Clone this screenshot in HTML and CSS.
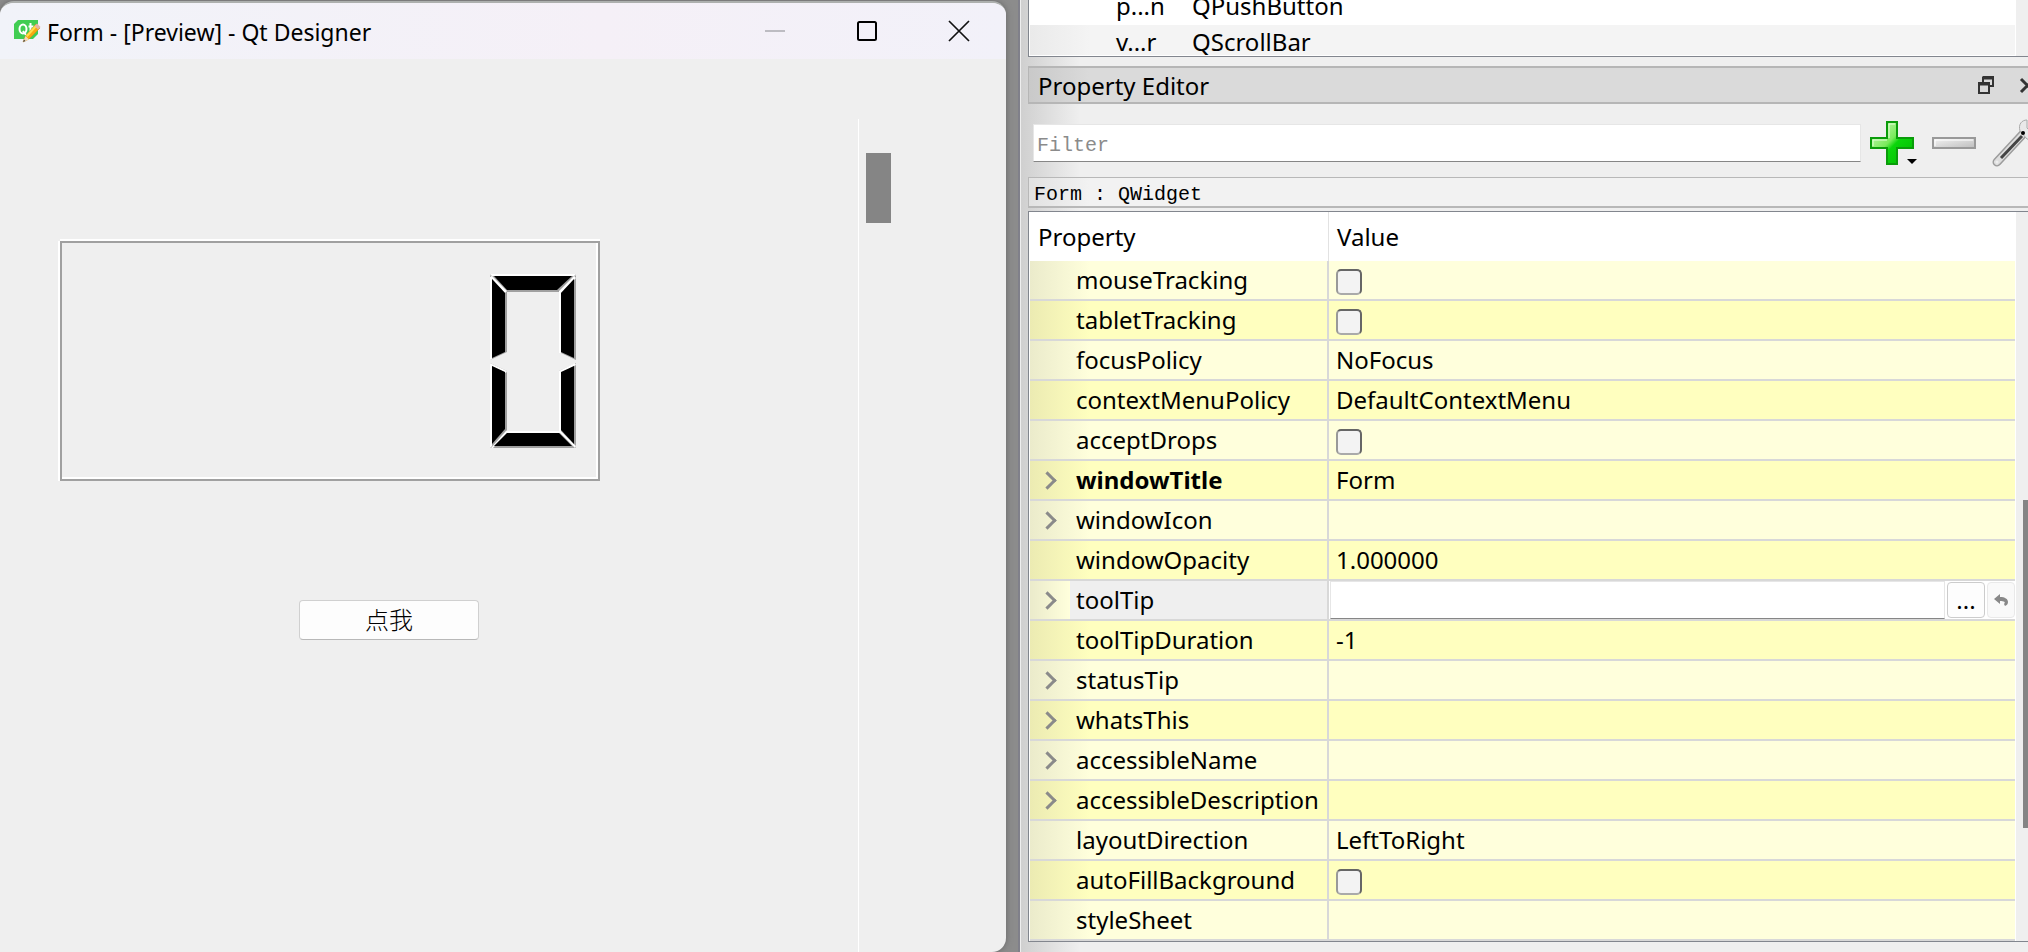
FILE: index.html
```html
<!DOCTYPE html>
<html lang="en">
<head>
<meta charset="utf-8">
<title>Form - [Preview] - Qt Designer</title>
<link rel="stylesheet" href="styles.css">
</head>
<body>
<div class="desktop">
  <section class="preview" aria-label="Form preview">
    <header class="titlebar">
      <svg class="app-icon" viewBox="0 0 28 26" aria-hidden="true">
        <path d="M5 2h20v14l-5 5H1V6z" fill="#41cd52"/>
        <ellipse cx="10" cy="11" rx="3.500" ry="4.500" fill="none" stroke="#fff" stroke-width="2"/>
        <path d="M10 13l3 4M17.500 5v8q0 2 2 2M15.500 8.500h5" fill="none" stroke="#fff" stroke-width="2"/>
        <path d="M10 24l2.500-6L23 6l4 4-11 11z" fill="#f7a90f" stroke="#d08b1c" stroke-width=".6"/>
        <path d="M13 17.500L22.500 7l1.500 1.500L14.500 19z" fill="#ffe04a"/>
        <path d="M21.500 8L24 5.500l3.500 3.500-2.500 2.500z" fill="#e3b3a6"/>
        <path d="M10 24l2.500-6 3.500 3.500z" fill="#f4dcb8"/>
        <path d="M10 24l1-2.500 1.500 1.500z" fill="#444"/>
      </svg>
      <h1 class="title">Form - [Preview] - Qt Designer</h1>
      <div class="window-buttons">
        <button class="wbtn" aria-label="Minimize" disabled><svg viewBox="0 0 20 20"><path d="M0 10h20" stroke="#bdbcc2" stroke-width="2"/></svg></button>
        <button class="wbtn" aria-label="Maximize"><svg viewBox="0 0 20 20"><rect x="1" y="1" width="18" height="18" rx="1.500" fill="none" stroke="#000" stroke-width="2"/></svg></button>
        <button class="wbtn" aria-label="Close"><svg viewBox="0 0 20 20"><path d="M0 0l20 20M20 0L0 20" stroke="#111" stroke-width="1.700"/></svg></button>
      </div>
    </header>
    <div class="form">
      <div class="form-main">
        <div class="lcd" role="img" aria-label="0">
          <svg class="digit" viewBox="0 0 88 176">
            <g fill="#a0a0a0">
              <path d="M1 1h86L71 19H17z"/><path d="M1 2l17 16v61L1 87z"/><path d="M87 2v85l-17-8V18z"/>
              <path d="M1 90l17 8v59L1 175z"/><path d="M87 90v85l-17-16V98z"/><path d="M1 175l16-17h54l16 17z"/>
            </g>
            <g fill="#fff">
              <path d="M1 1h86l-2 2H3z"/><path d="M1 4l2-1 15 15-2 2z"/><path d="M1 4h2v82l-2 1z"/><path d="M70 18L85 3l2 2-15 15v60h-2z"/>
              <path d="M1 90l17 8-1 2L3 93v80l-2 2z"/><path d="M86 90l1 2-15 8v58l15 15-1 2-16-16V98z"/><path d="M2 175l15-17h54v2H18L4 175z"/>
            </g>
            <path d="M5 3h78L68 17H18z"/><path d="M3 6l13 14v59L3 85z"/><path d="M85 6v79l-13-6V20z"/>
            <path d="M3 93l13 6v57L3 171z"/><path d="M85 93v78l-13-14V99z"/><path d="M5 173l13-13h52l13 13z"/>
          </svg>
        </div>
        <button class="push">点我</button>
      </div>
      <div class="vscroll"><div class="vthumb"></div></div>
    </div>
  </section>

  <section class="designer" aria-label="Qt Designer">
    <div class="inspector">
      <div class="inspector-rows">
        <div class="obj"><span>p...n</span><span>QPushButton</span></div>
        <div class="obj alt"><span>v...r</span><span>QScrollBar</span></div>
      </div>
      <div class="gutter"></div>
    </div>

    <header class="dock">
      <h2 class="dock-title">Property Editor</h2>
      <button class="dbtn" aria-label="Float"><svg viewBox="0 0 16 18"><path d="M5 1h10v9h-4M5 1v5" fill="none" stroke="#333" stroke-width="2"/><path d="M4 2h12" stroke="#333" stroke-width="3"/><rect x="1" y="7" width="10" height="10" fill="#d9d9d9" stroke="#333" stroke-width="2"/><path d="M0 8h12" stroke="#333" stroke-width="3"/></svg></button>
      <button class="dbtn" aria-label="Close panel"><svg viewBox="0 0 16 18"><path d="M1 3l13 13M14 3L1 16" stroke="#333" stroke-width="3"/></svg></button>
    </header>

    <div class="tools">
      <input class="filter" type="text" placeholder="Filter" aria-label="Filter">
      <button class="tool plus" aria-label="Add dynamic property">
        <svg viewBox="0 0 46 44">
          <defs><linearGradient id="g" x1="0" y1="0" x2="1" y2="1"><stop offset="0" stop-color="#d8f9c8"/><stop offset=".45" stop-color="#7aea5c"/><stop offset=".55" stop-color="#0bd60b"/><stop offset="1" stop-color="#00b800"/></linearGradient></defs>
          <path d="M17 1h10v16h16v10H27v16H17V27H1V17h16z" fill="url(#g)" stroke="#0a9c0a" stroke-width="2"/>
          <path d="M19 17V3h6M3 25v-6h14" fill="none" stroke="#e2ffd8" stroke-width="1"/>
        </svg>
        <svg class="caret" viewBox="0 0 10 6"><path d="M0 0h10L5 5z"/></svg>
      </button>
      <button class="tool minus" aria-label="Remove dynamic property">
        <svg viewBox="0 0 44 12"><defs><linearGradient id="m" x1="0" y1="0" x2="1" y2="1"><stop offset="0" stop-color="#f4f4f4"/><stop offset="1" stop-color="#bdbdbd"/></linearGradient></defs><rect x="1" y="1" width="42" height="10" fill="url(#m)" stroke="#999" stroke-width="2"/><path d="M3 9V3h38" fill="none" stroke="#fff"/></svg>
      </button>
      <button class="tool wrench" aria-label="Configure Property Editor">
        <svg viewBox="0 0 48 48">
          <path d="M5 43L31 15" stroke="#9c9c9c" stroke-width="9" stroke-linecap="round"/>
          <path d="M5 43L31 15" stroke="#dedede" stroke-width="6" stroke-linecap="round"/>
          <path d="M9 39L30 17" stroke="#444" stroke-width="3"/>
          <path d="M28 12c-2-7 2-11 7-11v8l4 4 8-1c0 7-6 10-12 8z" fill="#e9e9e9" stroke="#aaa"/>
          <circle cx="31" cy="14" r="2"/><circle cx="5" cy="43" r="1.500" fill="#eee"/>
        </svg>
      </button>
    </div>

    <div class="object-name">Form : QWidget</div>

    <div class="props">
      <table class="table">
        <thead><tr><th>Property</th><th>Value</th></tr></thead>
        <tbody>
          <tr><td><label for="c1">mouseTracking</label></td><td><input id="c1" class="check" type="checkbox"></td></tr>
          <tr><td><label for="c2">tabletTracking</label></td><td><input id="c2" class="check" type="checkbox"></td></tr>
          <tr><td>focusPolicy</td><td>NoFocus</td></tr>
          <tr><td>contextMenuPolicy</td><td>DefaultContextMenu</td></tr>
          <tr><td><label for="c3">acceptDrops</label></td><td><input id="c3" class="check" type="checkbox"></td></tr>
          <tr class="more changed"><td>windowTitle</td><td>Form</td></tr>
          <tr class="more"><td>windowIcon</td><td></td></tr>
          <tr><td>windowOpacity</td><td>1.000000</td></tr>
          <tr class="more current"><td><label for="tip">toolTip</label></td><td><div class="edit"><input id="tip" class="edit-text" type="text"><button class="edit-more">...</button><button class="edit-reset" aria-label="Reset"><svg viewBox="0 0 14 12"><path d="M0 5l6-5v3c5 0 8 2 8 5 0 2-1 3-3 4l-1-2c2-2 0-3-4-3v3z" fill="#888"/></svg></button></div></td></tr>
          <tr><td>toolTipDuration</td><td>-1</td></tr>
          <tr class="more"><td>statusTip</td><td></td></tr>
          <tr class="more"><td>whatsThis</td><td></td></tr>
          <tr class="more"><td>accessibleName</td><td></td></tr>
          <tr class="more"><td>accessibleDescription</td><td></td></tr>
          <tr><td>layoutDirection</td><td>LeftToRight</td></tr>
          <tr><td><label for="c4">autoFillBackground</label></td><td><input id="c4" class="check" type="checkbox"></td></tr>
          <tr><td>styleSheet</td><td></td></tr>
        </tbody>
      </table>
      <div class="gutter"><div class="gthumb"></div></div>
    </div>
  </section>
</div>
</body>
</html>
```
FILE: styles.css
```css
* { box-sizing: border-box; }
body { margin: 0; background: #8c8c8c; color: #000; font: 24px/32px "Noto Sans", "Noto Sans CJK SC", sans-serif; }
h1, h2 { margin: 0; font-size: inherit; font-weight: 400; }
button { border: 0; padding: 0; background: none; font: inherit; color: inherit; }
svg { display: block; overflow: visible; }

.desktop { display: grid; grid-template-columns: 1006fr 1010fr; column-gap: 12px; height: 100vh; overflow: hidden; }

.preview { display: flex; flex-direction: column; margin-top: 1px; border-top: 2px solid #adb0ae; border-radius: 14px 14px 14px 0; background: #efefef; overflow: hidden; box-shadow: 0 0 6px #666; }
.titlebar { display: flex; align-items: center; height: 56px; padding-left: 13px; background: linear-gradient(90deg, #f1f3f9, #f5f0f7 60%, #f2f1f9); }
.app-icon { width: 28px; height: 26px; }
.title { flex: 1; padding: 2px 0 0 6px; font-size: 23px; }
.window-buttons { display: flex; padding-right: 1px; }
.wbtn { display: grid; place-items: center; width: 92px; height: 56px; }
.wbtn svg { width: 20px; height: 20px; }
.form { flex: 1; display: flex; }
.form-main { flex: 1; display: flex; flex-direction: column; align-items: flex-start; padding: 182px 0 0 60px; }
.lcd { display: flex; justify-content: flex-end; width: 540px; max-width: 100%; height: 240px; padding: 30px 21px; border: 2px solid #a0a0a0; box-shadow: inset -2px -2px #fff, 0 -2px #fff, -2px 0 #fff; }
.digit { width: 88px; height: 176px; }
.push { width: 180px; height: 40px; margin: 119px 0 0 239px; border: 1px solid #d0d0d0; border-bottom-color: #b8b8b8; border-radius: 4px; background: #fdfdfd; font: 300 24px/34px "Noto Sans CJK SC", sans-serif; padding-bottom: 2px; }
.vscroll { width: 148px; margin-top: 60px; padding: 34px 0 0 7px; border-left: 1px solid #fff; }
.vthumb { width: 25px; height: 70px; background: #858585; }

.designer { min-width: 0; display: flex; flex-direction: column; padding-left: 8px; border-left: 2px solid #80808a; box-shadow: inset 1px 0 #eee; background: linear-gradient(90deg, #cfcfcf, #efefef 60px); }
.inspector { display: flex; height: 57px; border: solid #82868e; border-width: 0 0 1px 1px; background: #fff; }
.inspector-rows { flex: 1; padding: 0 0 1px 1px; overflow: hidden; display: flex; flex-direction: column; justify-content: flex-end; }
.obj { display: grid; grid-template-columns: 76px 1fr; flex: none; height: 36px; padding-left: 86px; line-height: 34px; }
.alt { height: 30px; background: linear-gradient(90deg, #eaeaea, #f4f4f4 60px); }
.gutter { width: 12px; margin-left: 1px; background: #efefef; }

.dock { display: flex; align-items: center; height: 38px; margin-top: 9px; padding-left: 9px; border: solid #b6b6b6; border-width: 2px 0 2px 1px; background: linear-gradient(90deg, #c9c9c9, #dadada 60px); overflow: hidden; }
.dock-title { flex: 1; padding-top: 2px; line-height: 34px; }
.dbtn { flex: none; margin-right: 26px; }
.dbtn:last-child { margin-right: -8px; }
.dbtn svg { width: 16px; height: 18px; }

.tools { display: flex; align-items: center; height: 73px; padding: 4px 0 0 5px; overflow: hidden; }
.filter { flex: 1; min-width: 0; height: 38px; margin-right: 9px; padding: 5px 3px 0; border: 1px solid #e6e6e6; border-bottom-color: #868686; border-radius: 0; background: #fff; font: 20px/30px "Liberation Mono", monospace; }
.filter::placeholder { color: #8b8b8b; opacity: 1; }
.tool { flex: none; position: relative; }
.plus { width: 62px; }
.plus > svg:first-child { width: 46px; height: 44px; }
.tool .caret { position: absolute; left: 37px; bottom: 0; width: 10px; height: 6px; }
.minus svg { width: 44px; height: 12px; }
.wrench { width: 36px; margin-left: 16px; }
.wrench svg { width: 48px; height: 48px; }

.object-name { height: 31px; padding-left: 5px; border: solid #b8b8b8; border-width: 1px 0 2px 1px; background: linear-gradient(90deg, #e2e2e2, #f2f2f2 60px); font: 20px/34px "Liberation Mono", monospace; }

.props { display: flex; margin-top: 3px; border: solid #82868e; border-width: 1px 0 1px 1px; padding-left: 1px; background: #fff; }
.table { flex: 1; border-collapse: separate; border-spacing: 0; table-layout: fixed; }
.table th, .table td { padding: 0; text-align: left; white-space: nowrap; }
.table th { height: 49px; padding-left: 8px; font-weight: 400; }
.table th:first-child { width: 299px; border-right: 1px solid #e2e2e2; }
.table td { height: 40px; line-height: 36px; padding-left: 7px; border-bottom: 2px solid #d8d8d8; background: #ffffbf; }
.table td:first-child { padding-left: 46px; border-right: 2px solid #d8d8d8; background: linear-gradient(90deg, #ecebb2, #ffffbf 60px); }
.table tr:nth-child(odd) td { background: #ffffdc; }
.table tr:nth-child(odd) td:first-child { background: linear-gradient(90deg, #ebebcb, #ffffdc 60px); }
.more td:first-child::before { content: ""; display: inline-block; width: 10px; height: 10px; margin: 0 22px 2px -32px; border: solid #8a8a8a; border-width: 3px 3px 0 0; transform: rotate(45deg); }
.table .more td:first-child { padding-left: 43px; }
.changed td:first-child { font-weight: 700; }
.table tbody tr.current td:first-child { background: linear-gradient(90deg, #ebebcb, #ffffdc 40px, #efefef 40px); }
.table tbody tr.current td:last-child { padding-left: 1px; background: #fff; }
.check { appearance: none; display: block; width: 26px; height: 26px; margin: 4px 0 0; border: 2px solid #666; border-left-color: #999; border-bottom-color: #aaa; border-radius: 5px; background: #f3f3f3; }
.edit { display: flex; align-items: center; gap: 2px; height: 38px; }
.edit-text { flex: 1; min-width: 0; height: 38px; border: 1px solid #e6e6e6; border-bottom: 1px solid #868686; background: #fff; font: inherit; }
.edit-more { width: 38px; height: 36px; border: 1px solid #ccc; border-radius: 4px; background: #fdfdfd; line-height: 32px; }
.edit-reset { display: grid; place-items: center; width: 28px; height: 36px; border: 1px solid #e9e9e9; border-radius: 4px; background: #f9f9f9; }
.edit-reset svg { width: 14px; height: 12px; }
.gthumb { width: 5px; height: 328px; margin: 288px 0 0 7px; background: #858585; }
```
